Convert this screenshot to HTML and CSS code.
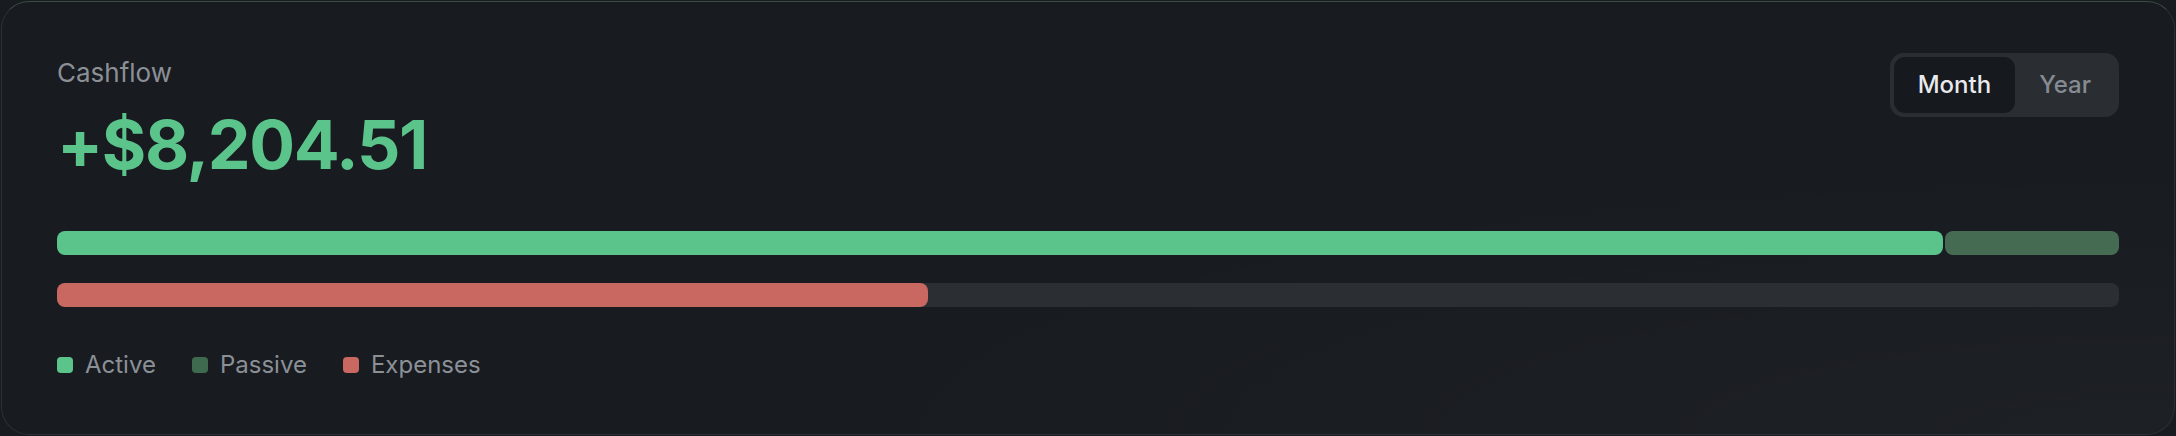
FILE: index.html
```html
<!DOCTYPE html>
<html lang="en">
<head>
    <meta charset="UTF-8">
    <meta name="viewport" content="width=device-width, initial-scale=1.0">
    <title>Cashflow</title>
    <link rel="stylesheet" href="styles.css">
</head>
<body>

<div class="card">
    <!-- 标题 + 切换 -->
    <div class="card-head">
        <div>
            <div class="label">Cashflow</div>
            <div class="amount">+$8,204.51</div>
        </div>
        <div class="toggle">
            <button class="toggle-btn active">Month</button>
            <button class="toggle-btn">Year</button>
        </div>
    </div>

    <!-- 收入条 -->
    <div class="bar">
        <div class="seg seg-active" style="width: 91.45%"></div>
        <div class="seg seg-passive"></div>
    </div>

    <!-- 支出条 -->
    <div class="bar bar-track">
        <div class="seg seg-expense" style="width: 42.25%"></div>
    </div>

    <div class="legend">
        <span class="legend-item"><i class="dot dot-active"></i>Active</span>
        <span class="legend-item"><i class="dot dot-passive"></i>Passive</span>
        <span class="legend-item"><i class="dot dot-expense"></i>Expenses</span>
    </div>
</div>

</body>
</html>
```

FILE: styles.css
```css
        html, body {
            height: 100%;
        }
        body {
            font-family: Inter, 'Noto Sans', sans-serif;
            margin: 0;
            padding: 1px;
            box-sizing: border-box;
            background-color: #181b20;
        }
        .card {
            box-sizing: border-box;
            height: 100%;
            background-color: #181b20;
            background-image: radial-gradient(ellipse at 100% 100%, rgba(255, 255, 255, 0.025), rgba(255, 255, 255, 0) 45%);
            border: 1px solid #2c3036;
            border-top-color: #3a4d41;
            border-radius: 28px;
            padding: 55px 55px 0 55px;
        }
        .card-head {
            display: flex;
            justify-content: space-between;
            align-items: flex-start;
        }
        .label {
            font-size: 26px;
            line-height: 32px;
            color: #8b9097;
        }
        .amount {
            margin-top: 20px;
            font-size: 68px;
            line-height: 70px;
            font-weight: 700;
            letter-spacing: -0.02em;
            color: #5ac48b;
        }
        .toggle {
            display: flex;
            margin-top: -4px;
            padding: 4px;
            background-color: #2a2e33;
            border-radius: 14px;
        }
        .toggle-btn {
            font-family: inherit;
            font-size: 24px;
            font-weight: 500;
            line-height: 56px;
            height: 56px;
            padding: 0 24px;
            border: none;
            border-radius: 11px;
            background: transparent;
            color: #868b92;
            cursor: pointer;
        }
        .toggle-btn.active {
            background-color: #16191d;
            color: #e8eaed;
        }
        .bar {
            display: flex;
            gap: 2px;
            height: 24px;
            margin-top: 52px;
        }
        .bar + .bar {
            margin-top: 28px;
        }
        .bar-track {
            background-color: #2b2f34;
            border-radius: 8px;
        }
        .seg {
            height: 100%;
            border-radius: 8px;
        }
        .seg-active {
            background-color: #5ac48b;
        }
        .seg-passive {
            flex: 1;
            background-color: #466b53;
        }
        .seg-expense {
            background-color: #c96761;
        }
        .legend {
            display: flex;
            gap: 36px;
            margin-top: 44px;
            font-size: 24px;
            line-height: 28px;
            color: #8b9097;
        }
        .legend-item {
            display: flex;
            align-items: center;
            gap: 12px;
        }
        .dot {
            width: 16px;
            height: 16px;
            border-radius: 4px;
        }
        .dot-active {
            background-color: #5ac48b;
        }
        .dot-passive {
            background-color: #3f6a4f;
        }
        .dot-expense {
            background-color: #c96761;
        }
```
